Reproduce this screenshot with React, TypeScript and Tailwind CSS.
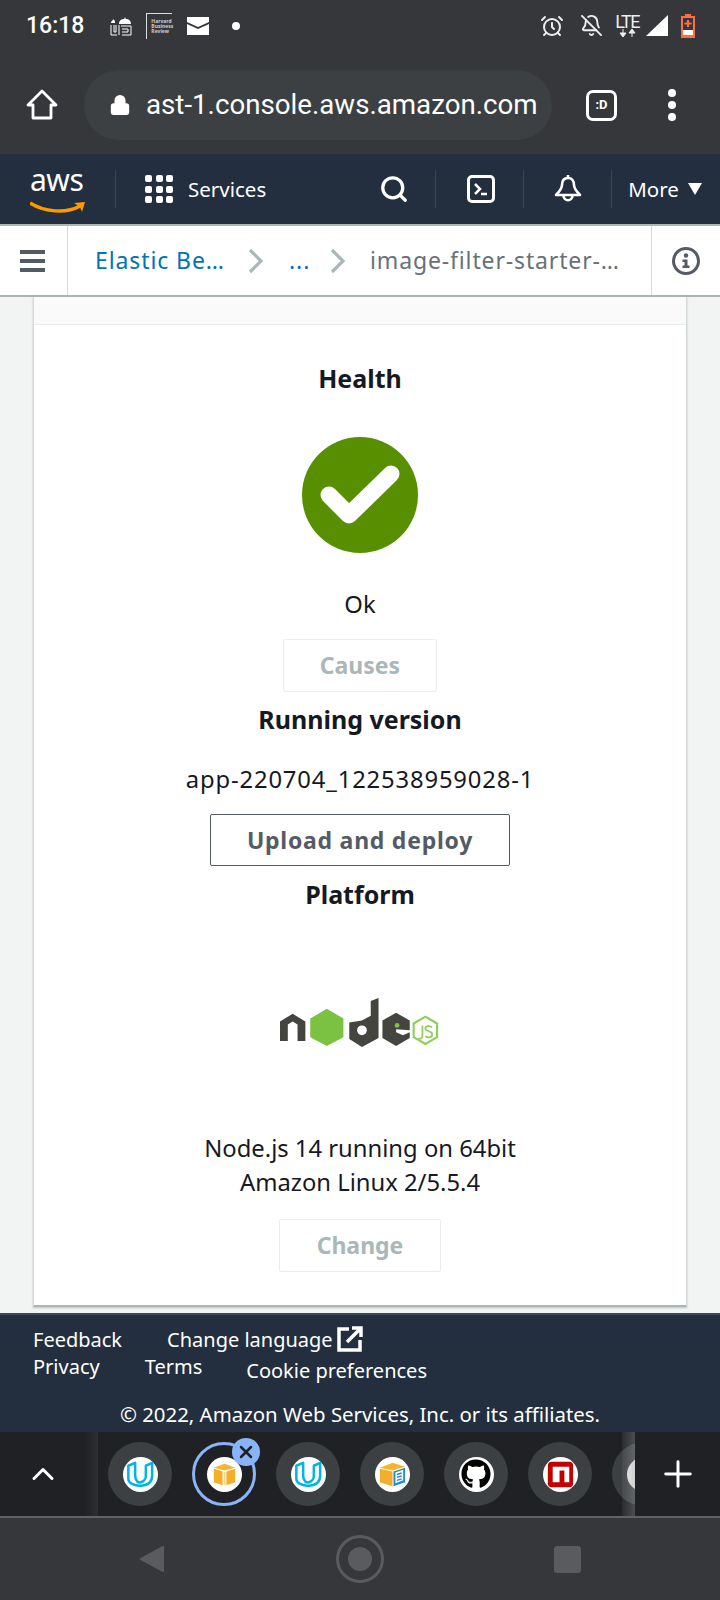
import { Search, Plus, ChevronUp, X, AlarmClock, BellOff, Lock } from "lucide-react";
import { FaGithub } from "react-icons/fa";

const sans = "font-['Noto_Sans',sans-serif]";

function UdacityIcon() {
  return (
    <svg viewBox="0 0 36 36" className="h-[35px] w-[35px]">
      <circle cx="18" cy="18" r="18" fill="#fff" />
      <path d="M5.500 22V9l7-3v13c0 5 3 8 6 7 4-1.500 5-3 5-7V9L30 6v13c0 7-5 10-11 10.500-6 .5-13.500-2-13.500-7.500z" fill="none" stroke="#02b3e4" strokeWidth="2.600" strokeLinejoin="round" />
    </svg>
  );
}

function BoxIcon() {
  return (
    <svg viewBox="0 0 36 36" className="h-[35px] w-[35px]">
      <circle cx="18" cy="18" r="18" fill="#fff" />
      <path d="M7 11l11-4 11 4-11 3z" fill="#f7b52c" />
      <path d="M7 12l9 3v14l-9-3zM29 12l-9 3v14l9-3z" fill="#f3af2a" />
      <path d="M17 15h2v14h-2z" fill="#f9d68a" />
    </svg>
  );
}

function BookIcon() {
  return (
    <svg viewBox="0 0 36 36" className="h-[35px] w-[35px]">
      <circle cx="18" cy="18" r="18" fill="#fff" />
      <path d="M5 11l13-5 13 4-13 4z" fill="#f7b52c" />
      <path d="M5 12l13 3v15l-13-4z" fill="#f3af2a" />
      <path d="M19 15l12-4v15l-12 4z" fill="#1f8ed1" />
      <path d="M21 16l8-3v11l-8 3z" fill="#fff" />
      <path d="M22.500 18l5-1.500M22.500 21l5-1.500M22.500 24l5-1.500" stroke="#1f8ed1" strokeWidth="1.500" />
    </svg>
  );
}

function NpmIcon() {
  return (
    <svg viewBox="0 0 36 36" className="h-[35px] w-[35px]">
      <circle cx="18" cy="18" r="18" fill="#fff" />
      <rect x="5" y="5" width="26" height="26" rx="4" fill="#c20000" />
      <path d="M10 10h17v16h-5V14h-5v12h-7z" fill="#fff" />
    </svg>
  );
}

function Tab({ children }: { children: React.ReactNode }) {
  return (
    <div className="flex h-16 w-16 shrink-0 items-center justify-center rounded-full bg-[#3c4043]">
      {children}
    </div>
  );
}

function NodeLogo() {
  return (
    <svg viewBox="0 0 164 50" className="h-[49px] w-[160px] blur-[0.6px]">
      <path d="M0 24l13-8 13 8v20h-8V27l-5-3-5 3v17H0z" fill="#44453f" />
      <path d="M48 11l17 10v19l-17 9-17-9V21z" fill="#7cc242" />
      <path d="M84 23l9-5V3l8-3v41l-17 9-13-8V25z" fill="#44453f" />
      <circle cx="84" cy="33" r="5" fill="#fff" />
      <path d="M119 15l14 8v10l-14-1v3l7 3 7-3v6l-14 8-14-8V23z" fill="#44453f" />
      <circle cx="120" cy="28" r="2.500" fill="#7cc242" />
      <path d="M149 19l12 7v14l-12 7-12-7V26z" fill="none" stroke="#8fce5b" strokeWidth="2.200" />
      <path d="M146 28v11c0 3-3 3-4 2M156 30c-2-2-7-2-7 1 0 4 7 2 7 6s-5 4-7 2" fill="none" stroke="#8fce5b" strokeWidth="1.800" />
    </svg>
  );
}

function Crumb() {
  return (
    <svg viewBox="0 0 16 26" className="h-[26px] w-[16px] shrink-0">
      <path d="M2 2l11 11L2 24" fill="none" stroke="#aab7b8" strokeWidth="3.200" />
    </svg>
  );
}

export default function App() {
  return (
    <div className={`${sans} flex h-[1600px] w-[720px] flex-col overflow-hidden bg-[#f2f3f3]`}>
      {/* android status bar */}
      <div className="flex h-[51px] shrink-0 items-center bg-[#36373b] pl-[26px] pr-[25px] text-white">
        <span className="font-['Roboto',sans-serif] text-[23px] font-medium leading-none">16:18</span>
        <svg viewBox="0 0 22 20" className="ml-[26px] h-[20px] w-[22px]" fill="#fff">
          <path d="M9 8c0-4 3-5 5-5 1-1 1-2 1-3 0 1 0 2 1 3 2 0 5 1 5 5zM1 7c0-2 1-2 2-3 0-1 0-1 0-2 0 1 0 1 1 2 1 1 1 1 1 3z" />
          <path d="M1 9v10h6M4 9v7h2V9M9 9v10M11 10h10v9H12M12 13h6v3h-6" fill="none" stroke="#fff" strokeWidth="1" />
        </svg>
        <div className="ml-[14px] flex h-[26px] w-[26px] flex-col justify-center border-l border-t border-[#ddd] pl-[4px] text-[5px] font-bold leading-[5px] text-[#ccc]">
          <span>Harvard</span>
          <span>Business</span>
          <span>Review</span>
        </div>
        <svg viewBox="0 0 22 18" className="ml-[15px] h-[18px] w-[22px]">
          <path d="M0 0h22v5L11 10 0 5z" fill="#fff" />
          <path d="M0 7l11 5 11-5v11H0z" fill="#fff" />
        </svg>
        <span className="ml-[23px] h-2 w-2 rounded-full bg-white" />
        <div className="ml-auto flex items-center">
          <AlarmClock size={24} strokeWidth={2} className="text-[#eee]" />
          <BellOff size={23} strokeWidth={2} className="ml-[16px] text-[#eee]" />
          <div className="ml-[13px] flex w-[22px] flex-col items-center">
            <span className="font-['Roboto',sans-serif] text-[18px] leading-[15px] tracking-[-1.5px] text-[#eee]">LTE</span>
            <svg viewBox="0 0 22 8" className="h-[8px] w-[22px]">
              <path d="M7 0v5M4 4l3 4 3-4zM16 8V3M13 4l3-4 3 4z" fill="#eee" stroke="#eee" strokeWidth="1" />
            </svg>
          </div>
          <svg viewBox="0 0 22 21" className="ml-[8px] h-[21px] w-[22px]">
            <path d="M22 0v21H0z" fill="#fff" />
          </svg>
          <svg viewBox="0 0 14 24" className="ml-[13px] h-[24px] w-[14px]">
            <path d="M4 0h6v2h4v22H0V2h4z" fill="#ff6e40" />
            <path d="M2 4h10v12H2z" fill="#36373b" />
            <path d="M2 16h10v5H2z" fill="#fff" />
            <path d="M6 6h2v2.500h2.500v2H8V13H6v-2.500H3.500v-2H6z" fill="#ff6e40" />
          </svg>
        </div>
      </div>

      {/* chrome toolbar */}
      <div className="flex h-[103px] shrink-0 items-start bg-[#36373b] pt-[19px]">
        <div className="flex h-[70px] w-[84px] shrink-0 items-center justify-center">
          <svg viewBox="0 0 32 32" className="h-[32px] w-[32px]">
            <path d="M16 2L2 16h5v13h18V16h5z" fill="none" stroke="#fff" strokeWidth="2.800" strokeLinejoin="round" />
          </svg>
        </div>
        <div className="flex h-[70px] w-[468px] shrink-0 items-center rounded-full bg-[#3c4043] pl-[25px]">
          <Lock size={22} fill="#fff" strokeWidth={2} className="text-white" />
          <span className="ml-[15px] font-['Roboto',sans-serif] text-[27.700px] leading-none text-white">ast-1.console.aws.amazon.com</span>
        </div>
        <div className="ml-[34px] flex h-[70px] items-center">
          <div className="flex h-[31px] w-[31px] items-center justify-center rounded-[7px] border-[3px] border-white font-['Roboto',sans-serif] text-[13px] font-bold text-white">:D</div>
        </div>
        <div className="ml-[51px] flex h-[70px] flex-col items-center justify-center gap-[4px]">
          <span className="h-2 w-2 rounded-full bg-white" />
          <span className="h-2 w-2 rounded-full bg-white" />
          <span className="h-2 w-2 rounded-full bg-white" />
        </div>
      </div>

      {/* aws console nav */}
      <div className="flex h-[70px] shrink-0 items-center bg-[#232f3e] text-white">
        <div className="relative ml-[30px] h-[44px] w-[56px] shrink-0">
          <span className="absolute left-0 top-[-6px] text-[30px] leading-[38px] tracking-[-0.5px]">aws</span>
          <svg viewBox="0 0 56 14" className="absolute bottom-[-3px] left-0 h-[14px] w-[56px]">
            <path d="M0 3c14 9 36 11 50 3" fill="none" stroke="#ff9900" strokeWidth="3.500" />
            <path d="M44 3l11-1-3 10-2-5z" fill="#ff9900" />
          </svg>
        </div>
        <div className="ml-[29px] h-[38px] w-px shrink-0 bg-[#3b4654]" />
        <div className="ml-[29px] grid w-[28px] grid-cols-3 gap-[3.500px]">
          {Array.from({ length: 9 }).map((_, i) => (
            <span key={i} className="h-[7px] w-[7px] rounded-[2px] bg-white" />
          ))}
        </div>
        <span className="ml-[15px] text-[20.500px]">Services</span>
        <Search size={30} strokeWidth={2.600} className="ml-[113px] shrink-0" />
        <div className="ml-[26px] h-[38px] w-px shrink-0 bg-[#3b4654]" />
        <div className="ml-[31px] flex h-[28px] w-[28px] shrink-0 items-center justify-center rounded-[5px] border-[3px] border-white">
          <svg viewBox="0 0 22 22" className="h-[22px] w-[22px]">
            <path d="M5 6l5 5-5 5M11 16h6" fill="none" stroke="#fff" strokeWidth="2.500" />
          </svg>
        </div>
        <div className="ml-[28px] h-[38px] w-px shrink-0 bg-[#3b4654]" />
        <svg viewBox="0 0 28 30" className="ml-[30px] h-[30px] w-[28px] shrink-0">
          <path d="M14 1v3M14 4c-4 0-6 3-6 7 0 4-3 7-6 10h24c-3-3-6-6-6-10 0-4-2-7-6-7z" fill="none" stroke="#fff" strokeWidth="2.600" strokeLinejoin="round" />
          <path d="M9.500 21c0 7 9 7 9 0" fill="none" stroke="#fff" strokeWidth="2.600" />
        </svg>
        <div className="ml-[29px] h-[38px] w-px shrink-0 bg-[#3b4654]" />
        <span className="ml-[16px] text-[20.500px]">More</span>
        <svg viewBox="0 0 14 12" className="ml-[9px] h-[12px] w-[14px]">
          <path d="M0 0h14L7 12z" fill="#fff" />
        </svg>
      </div>

      {/* breadcrumb */}
      <div className="flex h-[73px] shrink-0 items-center border-y-2 border-[#aab7b8] bg-white">
        <div className="flex h-full w-[68px] shrink-0 flex-col items-start justify-center gap-[5px] border-r border-[#d5dbdb] pl-[20px]">
          <span className="h-[4px] w-[25px] bg-[#545b64]" />
          <span className="h-[4px] w-[25px] bg-[#545b64]" />
          <span className="h-[4px] w-[25px] bg-[#545b64]" />
        </div>
        <span className="ml-[27px] w-[130px] whitespace-nowrap text-[23px] tracking-[0.9px] text-[#0073bb]">Elastic Be…</span>
        <div className="ml-[23px]"><Crumb /></div>
        <span className="ml-[25px] w-[18px] text-[23px] tracking-[0.9px] text-[#0073bb]">...</span>
        <div className="ml-[23px]"><Crumb /></div>
        <span className="ml-[24px] w-[281px] whitespace-nowrap text-[23px] tracking-[0.86px] text-[#687078]">image-filter-starter-…</span>
        <div className="flex h-full flex-1 items-center justify-center border-l border-[#d5dbdb]">
          <svg viewBox="0 0 28 28" className="h-[28px] w-[28px]">
            <circle cx="14" cy="14" r="12.500" fill="none" stroke="#545b64" strokeWidth="3" />
            <circle cx="14" cy="8.500" r="2.200" fill="#545b64" />
            <path d="M10.500 12.500h5v6h2v2.500h-7v-2.500h2v-3.500h-2z" fill="#545b64" />
          </svg>
        </div>
      </div>

      {/* main card */}
      <div className="flex-1 px-[33px]">
        <div className="flex h-[1010px] flex-col items-center border-x border-b-2 border-x-[#d5dbdb] border-b-[#aab7b8] bg-white text-[23.800px] text-[#16191f] shadow-[0_1px_2px_rgba(0,0,0,0.2)]">
          <div className="h-[28px] w-full shrink-0 border-b border-[#eaeded] bg-[#fafafa]" />
          <h2 className="mt-[36px] text-[25px] font-bold leading-[34px]">Health</h2>
          <div className="mt-[42px] flex h-[116px] w-[116px] items-center justify-center rounded-full bg-[#578f00]">
            <svg viewBox="0 0 80 60" className="h-[60px] w-[80px]">
              <path d="M9 30l20 20L71 9" fill="none" stroke="#fff" strokeWidth="17" strokeLinecap="round" strokeLinejoin="round" />
            </svg>
          </div>
          <p className="mt-[36px] leading-[30px]">Ok</p>
          <div className="mt-[20px] flex h-[53px] w-[154px] items-center justify-center rounded-[2px] border border-[#eaeded] text-[23px] font-bold text-[#aab7b8]">Causes</div>
          <h2 className="mt-[10px] text-[25px] font-bold leading-[34px]">Running version</h2>
          <p className="mt-[27px] leading-[32px] tracking-[0.85px]">app-220704_122538959028-1</p>
          <div className="mt-[19px] flex h-[52px] w-[300px] items-center justify-center rounded-[2px] border border-[#545b64] text-[23px] font-bold tracking-[0.75px] text-[#545b64]">Upload and deploy</div>
          <h2 className="mt-[11px] text-[25px] font-bold leading-[34px]">Platform</h2>
          <div className="mt-[86px] flex h-[50px] items-center">
            <NodeLogo />
          </div>
          <p className="mt-[84px] text-center leading-[34px]">
            Node.js 14 running on 64bit
            <br />
            Amazon Linux 2/5.5.4
          </p>
          <div className="mt-[20px] flex h-[53px] w-[162px] items-center justify-center rounded-[2px] border border-[#eaeded] text-[23px] font-bold text-[#aab7b8]">Change</div>
        </div>
      </div>

      {/* footer */}
      <div className="relative h-[119px] shrink-0 border-t-2 border-[#3d4856] bg-[#232f3e] text-[20px] leading-[28px] text-white">
        <div className="flex h-[38px] items-start pl-[33px] pt-[11px]">
          <span className="leading-[27px]">Feedback</span>
          <span className="ml-[45px] leading-[27px]">Change language</span>
          <svg viewBox="0 0 26 26" className="ml-[4px] h-[26px] w-[26px]">
            <path d="M12 3H2v21h21V14" fill="none" stroke="#fff" strokeWidth="3.500" />
            <path d="M15 2h9v9M23 3L10 16" fill="none" stroke="#fff" strokeWidth="3.500" />
          </svg>
        </div>
        <div className="flex pl-[33px]">
          <span>Privacy</span>
          <span className="ml-[45px]">Terms</span>
          <span className="ml-[44px] mt-[4px]">Cookie preferences</span>
        </div>
        <p className="mt-[15px] text-center text-[20.400px]">© 2022, Amazon Web Services, Inc. or its affiliates.</p>
      </div>

      {/* tab strip */}
      <div className="relative flex h-[84px] shrink-0 items-center overflow-hidden bg-[#202124]">
        <div className="flex h-full w-[85px] shrink-0 items-center justify-center">
          <ChevronUp size={36} strokeWidth={2} className="text-white" />
        </div>
        <div className="h-full w-[13px] shrink-0 bg-gradient-to-r from-[#202124] to-[#2e2f32]" />
        <div className="ml-[10px] flex gap-5">
          <Tab><UdacityIcon /></Tab>
          <div className="relative flex h-16 w-16 shrink-0 items-center justify-center rounded-full border-[3px] border-[#8ab4f8]">
            <BoxIcon />
            <span className="absolute right-[-7px] top-[-7px] flex h-7 w-7 items-center justify-center rounded-full bg-[#8ab4f8]">
              <X size={20} strokeWidth={3} className="text-[#202124]" />
            </span>
          </div>
          <Tab><UdacityIcon /></Tab>
          <Tab><BookIcon /></Tab>
          <Tab>
            <span className="flex h-[35px] w-[35px] items-center justify-center rounded-full bg-white">
              <FaGithub size={30} className="text-black" />
            </span>
          </Tab>
          <Tab><NpmIcon /></Tab>
          <Tab><span className="h-[35px] w-[35px] rounded-full bg-gradient-to-r from-[#ddd] to-[#777]" /></Tab>
        </div>
        <div className="absolute bottom-0 right-[85px] top-0 w-[13px] bg-gradient-to-r from-white/5 to-white/20" />
        <div className="absolute bottom-0 right-0 top-0 flex w-[85px] items-center justify-center bg-[#202124]">
          <Plus size={42} strokeWidth={1.700} className="text-white" />
        </div>
      </div>

      {/* android nav bar */}
      <div className="flex h-[84px] shrink-0 items-center border-t-2 border-[#5f6368] bg-[#36373b]">
        <svg viewBox="0 0 25 28" className="ml-[139px] h-[28px] w-[25px]">
          <path d="M24 2v24L2 14z" fill="#5a5b5e" stroke="#5a5b5e" strokeWidth="2" strokeLinejoin="round" />
        </svg>
        <div className="ml-[172px] flex h-12 w-12 items-center justify-center rounded-full border-[3px] border-[#5a5b5e]">
          <span className="h-6 w-6 rounded-full bg-[#5a5b5e]" />
        </div>
        <span className="ml-[170px] h-[27px] w-[27px] rounded-[3px] bg-[#5a5b5e]" />
      </div>
    </div>
  );
}
